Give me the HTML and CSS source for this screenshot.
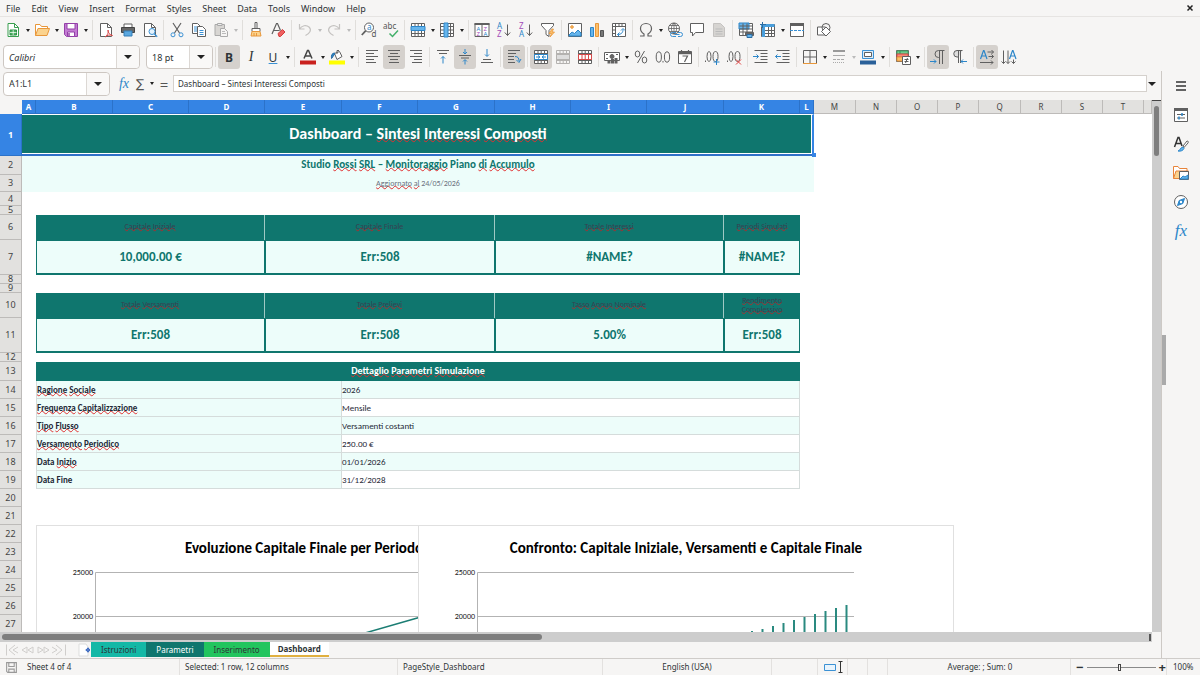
FILE: index.html
```html
<!DOCTYPE html>
<html lang="it">
<head>
  <meta charset="UTF-8">
  <meta name="viewport" content="width=device-width, initial-scale=1.0">
  <title>Dashboard – Sintesi Interessi Composti</title>
  <link rel="stylesheet" href="styles.css">
</head>
<body>
  <!-- Menu -->
  <nav class="menubar">
    <a href="#">File</a>
    <a href="#">Edit</a>
    <a href="#">View</a>
    <a href="#">Insert</a>
    <a href="#">Format</a>
    <a href="#">Styles</a>
    <a href="#">Sheet</a>
    <a href="#">Data</a>
    <a href="#">Tools</a>
    <a href="#">Window</a>
    <a href="#">Help</a>
    <button class="close-doc" aria-label="Close"><svg viewBox="0 0 8 8"><path d="M1.500 1.500l5 5M6.500 1.500l-5 5" stroke="#222" stroke-width="1.500"/></svg></button>
  </nav>

  <!-- Standard toolbar -->
  <div class="toolbar">
    <button class="tool" aria-label="New"><svg viewBox="0 0 16 16"><path d="M3 1.500h6.500l4 4v9H3z" fill="#fff" stroke="#3a9f50"/><path d="M9.500 1.500v4h4" stroke="#3a9f50"/><path d="M5 8h6.500v5H5z" fill="#4caf62" stroke="#2f9246"/><path d="M5 10.500h6.500M8.200 8v5" stroke="#fff" stroke-width=".7"/></svg></button>
    <button class="drop" aria-label="New options"></button>
    <button class="tool" aria-label="Open"><svg viewBox="0 0 16 16"><path d="M1.500 13.500V2.500H6l1.500 2h6v3" fill="#fff" stroke="#e8973a"/><path d="M1.500 13.500L4 6.500h11.500l-2.500 7z" fill="#fbd38e" stroke="#e8973a"/></svg></button>
    <button class="drop" aria-label="Open options"></button>
    <button class="tool" aria-label="Save"><svg viewBox="0 0 16 16"><path d="M1.500 1.500h13v13h-11l-2-2z" fill="#c37bd3" stroke="#9440a8"/><path d="M4 1.500h8v5.500H4z" fill="#fff" stroke="#9440a8"/><path d="M4.500 10h7v4.500h-7z" fill="#fff" stroke="#9440a8"/><path d="M6 11v3" stroke="#9440a8" stroke-width="1.500"/></svg></button>
    <button class="drop" aria-label="Save options"></button>
    <span class="sep"></span>
    <button class="tool" aria-label="Export as PDF"><svg viewBox="0 0 16 16"><path d="M2.500 1.500h7l4 4v9h-11z" fill="#fff"/><path d="M9.500 1.500v4h4"/><path d="M7 15c3-2 3.500-5 3-7 0 3 2 5 4.500 5.500C12 12.500 9 13 7 15z" stroke="#d84848"/></svg></button>
    <button class="tool" aria-label="Print"><svg viewBox="0 0 16 16"><path d="M4 5V2h8v3" fill="#fff"/><path d="M1.500 5.500h13v5h-13z" fill="#666" stroke="#444"/><path d="M4 9h8v5H4z" fill="#5ba8e0" stroke="#357fb8"/></svg></button>
    <button class="tool" aria-label="Print preview"><svg viewBox="0 0 16 16"><path d="M2.500 1.500h7l4 4v9h-11z" fill="#fff"/><path d="M9.500 1.500v4h4"/><circle cx="10" cy="9.500" r="3" fill="#e5f3fd" stroke="#3b91d4"/><path d="M12.200 11.700l3 3" stroke="#3b91d4" stroke-width="1.300"/></svg></button>
    <span class="sep"></span>
    <button class="tool" aria-label="Cut"><svg viewBox="0 0 16 16"><path d="M4 1l6.500 10M12 1L5.500 11" stroke-width="1.200"/><circle cx="4" cy="12.800" r="2" stroke="#3b91d4"/><circle cx="12" cy="12.800" r="2" stroke="#3b91d4"/></svg></button>
    <button class="tool" aria-label="Copy"><svg viewBox="0 0 16 16"><path d="M1.500 1.500h5l3 3v7h-8z" fill="#fff"/><path d="M3 5h3M3 7h3M3 9h3" stroke="#3b91d4"/><path d="M6.500 4.500h5l3 3v7h-8z" fill="#fff"/><path d="M8.500 8.500h4M8.500 10.500h4M8.500 12.500h4" stroke="#3b91d4"/></svg></button>
    <button class="tool" aria-label="Paste" disabled><svg viewBox="0 0 16 16"><path d="M2 2.500h9.500v11H2z" fill="#d8d6d3" stroke="#aaa"/><path d="M4.500 1.500h4.500v2H4.500z" fill="#eee" stroke="#aaa"/><path d="M7.500 6.500h4l3 3v5h-7z" fill="#f6f5f4" stroke="#aaa"/><path d="M9 9.500h3M9 11.500h4" stroke="#bbb"/></svg></button>
    <button class="drop off" aria-label="Paste options" disabled></button>
    <span class="sep"></span>
    <button class="tool" aria-label="Clone formatting"><svg viewBox="0 0 16 16"><path d="M7 .5h2v6H7z" fill="#fff"/><path d="M4 6.500h8v3H4z" fill="#fff"/><path d="M4 9.500h8l1 4.500H3z" fill="#fbd38e" stroke="#e8973a"/><path d="M6 11v3M8.500 11v3" stroke="#e8973a"/></svg></button>
    <button class="tool" aria-label="Clear formatting"><svg viewBox="0 0 16 16"><path d="M2 12L6.500 1.500h1l3 7M4 8.500h5.500" stroke-width="1.200"/><path d="M8 11.500l4.500-4 2.500 2.500-4.500 4.500H9z" fill="#ef6060" stroke="#d23c3c"/></svg></button>
    <span class="sep"></span>
    <button class="tool" aria-label="Undo" disabled><svg viewBox="0 0 16 16"><path d="M2.500 2v5h5M2.500 7C5 3.500 9 2.500 12 5c3 3 1 6-3.500 8.500" stroke="#c4c2c0" stroke-width="1.200"/></svg></button>
    <button class="drop off" aria-label="Undo list" disabled></button>
    <button class="tool" aria-label="Redo" disabled><svg viewBox="0 0 16 16"><path d="M13.500 2v5h-5M13.500 7C11 3.500 7 2.500 4 5c-3 3-1 6 3.500 8.500" stroke="#c4c2c0" stroke-width="1.200"/></svg></button>
    <button class="drop off" aria-label="Redo list" disabled></button>
    <span class="sep"></span>
    <button class="tool" aria-label="Find and replace"><svg viewBox="0 0 16 16"><circle cx="8" cy="5.500" r="4.500" fill="#fff"/><path d="M4.800 8.700L.8 13" stroke-width="1.800"/><text x="6" y="8" class="ic-t blue">a</text><text x="10.500" y="15" class="ic-t">d</text></svg></button>
    <button class="tool" aria-label="Spelling"><svg viewBox="0 0 16 16"><text x="0" y="7" class="ic-t">abc</text><path d="M6.500 11.500l3 3 5.500-6" stroke="#43b06a" stroke-width="1.500"/></svg></button>
    <span class="sep"></span>
    <button class="tool" aria-label="Row"><svg viewBox="0 0 16 16"><path d="M1.500 1.500h13v13h-13z" fill="#fff"/><path d="M1.500 11.500h13M5 8.500v6M8.200 8.500v6M11.500 8.500v6M5 1.500v3M8.200 1.500v3M11.500 1.500v3"/><path d="M1 4.500h14v4H1z" fill="#66b5ec" stroke="#2c86c9"/></svg></button>
    <button class="drop" aria-label="Row options"></button>
    <button class="tool" aria-label="Column"><svg viewBox="0 0 16 16"><path d="M1.500 1.500h13v13h-13z" fill="#fff"/><path d="M11.500 1.500v13M1.500 4.500h13M1.500 8h13M1.500 11.500h13"/><path d="M5 1h4v14H5z" fill="#66b5ec" stroke="#2c86c9"/></svg></button>
    <button class="drop" aria-label="Column options"></button>
    <span class="sep"></span>
    <button class="tool" aria-label="Sort"><svg viewBox="0 0 16 16"><path d="M1 1.500h14v13H1zM8 2v12" fill="#fff"/><path d="M.5 2h15" stroke-width="2"/><text x="2.500" y="8.600" class="ic-s blue">A</text><text x="2.500" y="14.300" class="ic-s purple">Z</text><text x="9.500" y="8.600" class="ic-s purple">Z</text><text x="9.500" y="14.300" class="ic-s blue">A</text></svg></button>
    <button class="tool" aria-label="Sort ascending"><svg viewBox="0 0 16 16"><text x="1" y="7" class="ic-t blue">A</text><text x="1" y="15" class="ic-t purple">Z</text><path d="M11.500 2.500v11M8.800 10.500l2.700 3 2.700-3"/></svg></button>
    <button class="tool" aria-label="Sort descending"><svg viewBox="0 0 16 16"><text x="1" y="7" class="ic-t purple">Z</text><text x="1" y="15" class="ic-t blue">A</text><path d="M11.500 2.500v11M8.800 10.500l2.700 3 2.700-3"/></svg></button>
    <button class="tool" aria-label="AutoFilter"><svg viewBox="0 0 16 16"><path d="M1.500 1.500h12v2l-4.500 5v6l-3-2V8.500l-4.500-5z" fill="#fff"/><path d="M12 7l-3 4.500h2.500L10 15l4.500-5H12l1.500-3z" fill="#fbc06c" stroke="#e8973a" stroke-width=".8"/></svg></button>
    <span class="sep"></span>
    <button class="tool" aria-label="Insert image"><svg viewBox="0 0 16 16"><path d="M1.500 1.500h13v13h-13z" fill="#fff"/><circle cx="5" cy="5" r="1.300" fill="#fbc06c" stroke="#e8973a"/><path d="M2 13l3-3 2.500 1.500L11 8l3 3v3H2z" fill="#66b5ec" stroke="#2c86c9"/></svg></button>
    <button class="tool" aria-label="Insert chart"><svg viewBox="0 0 16 16"><path d="M1.500 5.500h3v9h-3z" fill="#66b5ec" stroke="#2c86c9"/><path d="M6.500 1.500h3v13h-3z" fill="#fbc06c" stroke="#e8973a"/><path d="M11.500 8.500h3v6h-3z" fill="#777" stroke="#555"/></svg></button>
    <button class="tool" aria-label="Pivot table"><svg viewBox="0 0 16 16"><path d="M1.500 1.500h13v13h-13z" fill="#fff"/><path d="M1.500 4.500h13M4.500 1.500v13M8 1.500v3M11 1.500v3M1.500 8h3M1.500 11.500h3"/><path d="M6.500 12.500c4 0 5.500-2 5.500-5M10 8.500l2-2 2 2M8.500 10.500l-2 2 2 2" stroke="#2c86c9"/></svg></button>
    <span class="sep"></span>
    <button class="tool" aria-label="Special character"><svg viewBox="0 0 16 16"><path d="M2 14h4v-2C3.500 10.500 2.500 8.500 2.500 6.500 2.500 3.500 5 1.500 8 1.500s5.500 2 5.500 5c0 2-1 4-3.500 5.500v2h4" stroke-width="1.200"/></svg></button>
    <button class="drop" aria-label="Recent characters"></button>
    <button class="tool" aria-label="Hyperlink"><svg viewBox="0 0 16 16"><circle cx="7" cy="6.500" r="5.500" fill="#fff"/><path d="M1.500 6.500h11M2.500 3.500h9M2.500 9.500h9M7 1v11M7 1C3.500 4.500 3.500 8.500 7 12M7 1c3.500 3.500 3.500 7.500 0 11" stroke-width=".8"/><path d="M9 10.500H5.500a2 2 0 0 0 0 4H9M11 10.500h2.500a2 2 0 0 1 0 4H11M7.500 12.500h5" stroke="#3b91d4"/></svg></button>
    <button class="tool" aria-label="Comment"><svg viewBox="0 0 16 16"><path d="M1.500 1.500h13v9h-8L3.500 14v-3.500h-2z" fill="#fff"/></svg></button>
    <button class="tool" aria-label="Headers and footers" disabled><svg viewBox="0 0 16 16"><path d="M2.500 1.500h7l4 4v9h-11z" fill="#d6d4d1" stroke="#c4c2c0"/><path d="M4.500 7h7M4.500 9.500h7M4.500 12h7" stroke="#bbb"/></svg></button>
    <span class="sep"></span>
    <button class="tool" aria-label="Print area"><svg viewBox="0 0 16 16"><path d="M1.500 1.500h13v12h-13z" fill="#fff"/><path d="M1 1h10v6H1z" fill="#66b5ec" stroke="#2c86c9"/><path d="M1.500 4h13M1.500 7h13M1.500 10h13M5 1.500v12M9 1.500v12"/><path d="M7.500 10.500h8v3h-8z" fill="#666"/><path d="M9 12.500h5v3H9z" fill="#66b5ec" stroke="#2c6da3"/></svg></button>
    <button class="tool" aria-label="Freeze rows and columns"><svg viewBox="0 0 16 16"><path d="M1.500 2.500h13v12h-13z" fill="#fff"/><path d="M1.500 8.500h13M1.500 11.500h13M8.500 2.500v12M11.500 2.500v12"/><path d="M1 3.500h13.500M3.500 2v13" stroke="#4a9fdc" stroke-width="3"/><path d="M2.500 0v6M0 2.500h6" stroke="#2c6da3"/></svg></button>
    <button class="drop" aria-label="Freeze options"></button>
    <button class="tool" aria-label="Split window"><svg viewBox="0 0 16 16"><path d="M1.500 1.500h13v13h-13z" fill="#fff"/><path d="M1 2.500h14" stroke-width="3"/><path d="M1 8.500h14" stroke="#3b91d4" stroke-dasharray="3 1"/></svg></button>
    <span class="sep"></span>
    <button class="tool" aria-label="Draw functions"><svg viewBox="0 0 16 16"><path d="M1.500 5h8v8h-8z" fill="#fff"/><circle cx="10" cy="5.500" r="4"/><path d="M10 5l4.500 4.500L10 14l-4.500-4.500z" fill="#fff"/></svg></button>
  </div>

  <!-- Formatting toolbar -->
  <div class="toolbar">
    <div class="combo font-name"><input type="text" value="Calibri" aria-label="Font name"><button class="drop" aria-label="Font list"></button></div>
    <div class="combo font-size"><input type="text" value="18 pt" aria-label="Font size"><button class="drop" aria-label="Size list"></button></div>
    <span class="sep"></span>
    <button class="tool pressed letter" aria-label="Bold"><b>B</b></button>
    <button class="tool letter" aria-label="Italic"><i>I</i></button>
    <button class="tool letter" aria-label="Underline"><u>U</u></button>
    <button class="drop" aria-label="Underline options"></button>
    <span class="sep"></span>
    <button class="tool" aria-label="Font colour"><svg viewBox="0 0 16 16"><path d="M4 9.500L7.500 1.500h1l3.500 8M5.500 7h5" stroke="#444" stroke-width="1.500"/><path d="M0 13.500h16" stroke="#c9211e" stroke-width="4"/></svg></button>
    <button class="drop" aria-label="Font colours"></button>
    <button class="tool" aria-label="Background colour"><svg viewBox="0 0 16 16"><path d="M5.500 4.500l5-2 2.500 5-5 3z" fill="#fff"/><path d="M8 5V1.500h2"/><path d="M6 4C3 4 2 6 2.500 9.500 4 9 4 6 6 5" fill="#2c86c9" stroke="#2c6da3"/><path d="M0 13.500h16" stroke="#ffff00" stroke-width="4"/></svg></button>
    <button class="drop" aria-label="Background colours"></button>
    <span class="sep"></span>
    <button class="tool" aria-label="Align left"><svg viewBox="0 0 16 16"><path d="M2 1.500h12M2 4.500h8M2 7.500h12M2 10.500h8M2 13.500h10"/></svg></button>
    <button class="tool pressed" aria-label="Centre"><svg viewBox="0 0 16 16"><path d="M2 1.500h12M4 4.500h8M2 7.500h12M4 10.500h8M3 13.500h10"/></svg></button>
    <button class="tool" aria-label="Align right"><svg viewBox="0 0 16 16"><path d="M2 1.500h12M6 4.500h8M2 7.500h12M6 10.500h8M4 13.500h10"/></svg></button>
    <span class="sep"></span>
    <button class="tool" aria-label="Align top"><svg viewBox="0 0 16 16"><path d="M2 1.500h12M4 4.500h8"/><path d="M8 14.500v-7M6 9.500l2-2 2 2" stroke="#2c86c9"/></svg></button>
    <button class="tool pressed" aria-label="Centre vertically"><svg viewBox="0 0 16 16"><path d="M2 6.500h12M4 9h8"/><path d="M8 0v4.500M6 3l2 2 2-2M8 15.500V11M6 12.500l2-2 2 2" stroke="#2c86c9"/></svg></button>
    <button class="tool" aria-label="Align bottom"><svg viewBox="0 0 16 16"><path d="M4 10.500h8M2 13.500h12"/><path d="M8 0v7M6 5.500l2 2 2-2" stroke="#2c86c9"/></svg></button>
    <span class="sep"></span>
    <button class="tool pressed" aria-label="Wrap text"><svg viewBox="0 0 16 16"><path d="M2 1.500h12M2 4.500h8M2 7.500h6M2 10.500h6M2 13.500h7"/><path d="M9 7.500c3 0 4 1.500 4 4.500M10.500 11l2.500 2.500L15 10" stroke="#2c86c9"/></svg></button>
    <span class="sep"></span>
    <button class="tool pressed" aria-label="Merge and centre"><svg viewBox="0 0 16 16"><path d="M1.500 1.500h13v13h-13z" fill="#fff"/><path d="M5 1.500v13M8.200 1.500v13M11.500 1.500v13M1.500 4.500h13M1.500 11.500h13"/><path d="M1.500 5.500h13v5h-13z" fill="#fff" stroke="#2c86c9"/><path d="M3 8h4M9 8h4M5 6.500L7 8 5 9.500M11 6.500L9 8l2 1.500" stroke="#2c86c9"/></svg></button>
    <button class="tool" aria-label="Merge cells" disabled><svg viewBox="0 0 16 16"><path d="M1.500 1.500h13v13h-13zM5 1.500v13M8.200 1.500v13M11.500 1.500v13M1.500 4.500h13M1.500 11.500h13" stroke="#b4b2b0"/><path d="M1.500 5.500h13v5h-13z" fill="#ddd" stroke="#b4b2b0"/></svg></button>
    <button class="tool" aria-label="Unmerge cells"><svg viewBox="0 0 16 16"><path d="M1.500 1.500h13v13h-13z" fill="#fff"/><path d="M5 1.500v13M8.200 1.500v13M11.500 1.500v13M1.500 4.500h13M1.500 11.500h13"/><path d="M1.500 5.500h13v5h-13z" fill="#fff" stroke="#d84848"/><path d="M5 5.500v5M8.200 5.500v5M11.500 5.500v5" stroke="#d84848"/></svg></button>
    <span class="sep"></span>
    <button class="tool" aria-label="Currency"><svg viewBox="0 0 16 16"><path d="M.5 3.500h15v8H.5z" fill="#fff"/><circle cx="8" cy="7.500" r="2" fill="#666"/><path d="M2 5.500h2M12 5.500h2M2 9.500h2"/><path d="M5 12v2.500M8.500 10v4.500M12 9v5.500" stroke-width="3"/></svg></button>
    <button class="drop" aria-label="Currency options"></button>
    <button class="tool" aria-label="Percent"><svg viewBox="0 0 16 16"><ellipse cx="4.500" cy="5" rx="2.300" ry="3"/><ellipse cx="11.500" cy="11" rx="2.300" ry="3"/><path d="M11.500 2l-7 12"/></svg></button>
    <button class="tool" aria-label="Number"><svg viewBox="0 0 16 16"><ellipse cx="3.800" cy="8" rx="2.600" ry="5.200"/><ellipse cx="12" cy="8" rx="2.600" ry="5.200"/><path d="M8 12v1.500"/></svg></button>
    <button class="tool" aria-label="Date"><svg viewBox="0 0 16 16"><path d="M1.500 2.500h13v12h-13z" fill="#fff"/><path d="M1.500 4h13" stroke-width="2.500"/><path d="M4.500 1v3M11.500 1v3M5.500 7h5l-3 6" stroke-width="1.200"/></svg></button>
    <span class="sep"></span>
    <button class="tool" aria-label="Add decimal place"><svg viewBox="0 0 16 16"><path d="M1.500 11.500V13"/><ellipse cx="5" cy="7.500" rx="2" ry="5"/><ellipse cx="11.500" cy="7.500" rx="2.500" ry="5"/><path d="M12.500 10v6M9.500 13h6" stroke="#2c86c9"/></svg></button>
    <button class="tool" aria-label="Delete decimal place"><svg viewBox="0 0 16 16"><path d="M1.500 11.500V13"/><ellipse cx="5" cy="7.500" rx="2" ry="5"/><ellipse cx="11.500" cy="7.500" rx="2.500" ry="5"/><path d="M10 10.500l5 5M15 10.500l-5 5" stroke="#e04040"/></svg></button>
    <span class="sep"></span>
    <button class="tool" aria-label="Increase indent"><svg viewBox="0 0 16 16"><path d="M1.500 1.500h13M7.500 4.500h7M7.500 7.500h7M7.500 10.500h7M1.500 13.500h13"/><path d="M0 7.500h5.500M3.500 5.500l2 2-2 2" stroke="#2c86c9"/></svg></button>
    <button class="tool" aria-label="Decrease indent"><svg viewBox="0 0 16 16"><path d="M1.500 1.500h13M7.500 4.500h7M7.500 7.500h7M7.500 10.500h7M1.500 13.500h13"/><path d="M6 7.500H.5M2.500 5.500l-2 2 2 2" stroke="#2c86c9"/></svg></button>
    <span class="sep"></span>
    <button class="tool" aria-label="Borders"><svg viewBox="0 0 16 16"><path d="M1.500 14V1.500h13V14M8 1.500V14M1.500 8h13"/><path d="M1 14.500h14" stroke="#e8973a"/></svg></button>
    <button class="drop" aria-label="Border options"></button>
    <button class="tool" aria-label="Border style" disabled><svg viewBox="0 0 16 16"><path d="M2 2h12" stroke="#999" stroke-width="2"/><path d="M2 6.500h12" stroke="#aaa"/><path d="M2 10.500h12" stroke="#aaa" stroke-dasharray="3 1"/><path d="M2 13.500h12" stroke="#aaa" stroke-dasharray="1 1"/></svg></button>
    <button class="drop off" aria-label="Border styles" disabled></button>
    <button class="tool" aria-label="Border colour"><svg viewBox="0 0 16 16"><path d="M2.500 1.500h11v8h-11z" fill="#d9ecfa" stroke="#3b91d4"/><path d="M4.500 3.500h7v4h-7z" fill="#fff"/><path d="M0 13.500h16" stroke="#2a6099" stroke-width="4"/></svg></button>
    <button class="drop" aria-label="Border colours"></button>
    <span class="sep"></span>
    <button class="tool" aria-label="Conditional formatting"><svg viewBox="0 0 16 16"><path d="M1.500 1.500h12v11h-12z" fill="#fff"/><path d="M2 2h3v3H2zM5 2h8v3H5z" fill="#6fce8f" stroke="#43a866"/><path d="M2 5h11v3H2z" fill="#f58a7a" stroke="#d84848"/><path d="M2 8h6v4H2z" fill="#fbc06c" stroke="#e8973a"/><path d="M7.500 7.500h8v8h-8z" fill="#fff"/><path d="M9.500 10.500h4M9.500 12.500h4M12.500 9l-2 5"/></svg></button>
    <button class="drop" aria-label="Conditional formats"></button>
    <span class="sep"></span>
    <button class="tool pressed" aria-label="Left to right"><svg viewBox="0 0 16 16"><path d="M9.500 15V1.500M12.500 15V1.500M14.500 1.500H8.500a3.500 3.500 0 0 0 0 7h1"/><path d="M0 12.500h6M4 10.500l2 2-2 2" stroke="#2c86c9"/></svg></button>
    <button class="tool" aria-label="Right to left"><svg viewBox="0 0 16 16"><path d="M6.500 14V1.500M8.500 14V1.500M10.500 1.500H5a3 3 0 0 0 0 6.500h1.500" fill="#ddd"/><path d="M9 12.500h6M11 10.500l-2 2 2 2" stroke="#2c86c9"/></svg></button>
    <span class="sep"></span>
    <button class="tool pressed" aria-label="Text direction left to right"><svg viewBox="0 0 16 16"><path d="M1.500 10L4.500 1.500h.5L8 10M2.500 7H7" stroke="#2c86c9" stroke-width="1.200"/><path d="M8.500 3h6M9.500 7.500h5M1 13.500h13M12.500 1l2 2-2 2M12.500 5.500l2 2-2 2M12 11.500l2 2-2 2"/></svg></button>
    <button class="tool" aria-label="Text direction top to bottom"><svg viewBox="0 0 16 16"><path d="M8.500 10l3-8.500h.5l3 8.500M9.500 7H14" stroke="#2c86c9" stroke-width="1.200"/><path d="M2.500 1.500v13M7 1.500v13M12.500 10.500v4M.5 12.500l2 2 2-2M5 12.500l2 2 2-2M10.500 12.500l2 2 2-2"/></svg></button>
  </div>

  <div class="workspace">
    <main class="document">
      <!-- Formula bar -->
      <div class="formula-bar">
        <div class="combo name-box"><input type="text" value="A1:L1" aria-label="Name box"><button class="drop" aria-label="Names"></button></div>
        <button class="fx" aria-label="Function wizard"><i>fx</i></button>
        <button class="sigma" aria-label="Select function">∑</button>
        <button class="drop" aria-label="Functions"></button>
        <button class="equals" aria-label="Formula">=</button>
        <input class="formula" type="text" value="Dashboard – Sintesi Interessi Composti" aria-label="Input line">
        <button class="drop wide" aria-label="Expand formula bar"></button>
      </div>

      <div class="sheet-area">
        <div class="sheet">
          <table class="grid">
            <colgroup>
              <col class="c-head"><col class="c-edge">
              <col class="c-77"><col class="c-76"><col class="c-76"><col class="c-77"><col class="c-76">
              <col class="c-77"><col class="c-76"><col class="c-76"><col class="c-77"><col class="c-76">
              <col class="c-edge">
              <col class="c-42"><col class="c-41"><col class="c-41"><col class="c-41">
              <col class="c-42"><col class="c-41"><col class="c-41"><col class="c-41">
              <col>
            </colgroup>
            <thead>
              <tr>
                <th class="corner"></th>
                <th class="sel">A</th><th class="sel">B</th><th class="sel">C</th><th class="sel">D</th><th class="sel">E</th><th class="sel">F</th>
                <th class="sel">G</th><th class="sel">H</th><th class="sel">I</th><th class="sel">J</th><th class="sel">K</th><th class="sel">L</th>
                <th>M</th><th>N</th><th>O</th><th>P</th><th>Q</th><th>R</th><th>S</th><th>T</th><th></th>
              </tr>
            </thead>
            <tbody>
              <tr class="h-42"><th class="sel">1</th><td colspan="12" class="title">Dashboard – <s>Sintesi</s> <s>Interessi</s> <s>Composti</s><span class="selection"></span></td></tr>
              <tr class="h-19"><th>2</th><td colspan="12" class="subtitle">Studio <s>Rossi</s> <s>SRL</s> – <s>Monitoraggio</s> Piano <s>di</s> <s>Accumulo</s></td></tr>
              <tr class="h-17"><th>3</th><td colspan="12" class="updated"><s>Aggiornato</s> <s>al</s> 24/05/2026</td></tr>
              <tr class="h-14"><th>4</th></tr>
              <tr class="h-9"><th>5</th></tr>
              <tr class="h-25"><th>6</th><td></td>
                <td colspan="3" class="kpi-label"><s>Capitale</s> <s>Iniziale</s></td>
                <td colspan="3" class="kpi-label"><s>Capitale</s> Finale</td>
                <td colspan="3" class="kpi-label"><s>Totale</s> <s>Interessi</s></td>
                <td class="kpi-label"><s>Periodi</s> <s>Simulati</s></td>
              </tr>
              <tr class="h-35"><th>7</th><td></td>
                <td colspan="3" class="kpi">10,000.00 €</td>
                <td colspan="3" class="kpi">Err:508</td>
                <td colspan="3" class="kpi">#NAME?</td>
                <td class="kpi">#NAME?</td>
              </tr>
              <tr class="h-9"><th>8</th></tr>
              <tr class="h-9"><th>9</th></tr>
              <tr class="h-25"><th>10</th><td></td>
                <td colspan="3" class="kpi-label"><s>Totale</s> <s>Versamenti</s></td>
                <td colspan="3" class="kpi-label"><s>Totale</s> <s>Prelievi</s></td>
                <td colspan="3" class="kpi-label"><s>Tasso</s> <s>Annuo</s> <s>Nominale</s></td>
                <td class="kpi-label"><s>Rendimento</s> <s>Complessivo</s></td>
              </tr>
              <tr class="h-35"><th>11</th><td></td>
                <td colspan="3" class="kpi">Err:508</td>
                <td colspan="3" class="kpi">Err:508</td>
                <td colspan="3" class="kpi">5.00%</td>
                <td class="kpi">Err:508</td>
              </tr>
              <tr class="h-9"><th>12</th></tr>
              <tr class="h-19"><th>13</th><td></td><td colspan="10" class="detail-title"><s>Dettaglio</s> <s>Parametri</s> <s>Simulazione</s></td></tr>
              <tr class="h-18"><th>14</th><td></td><td colspan="4" class="param"><s>Ragione</s> <s>Sociale</s></td><td colspan="6" class="value mint">2026</td></tr>
              <tr class="h-18"><th>15</th><td></td><td colspan="4" class="param"><s>Frequenza</s> <s>Capitalizzazione</s></td><td colspan="6" class="value">Mensile</td></tr>
              <tr class="h-18"><th>16</th><td></td><td colspan="4" class="param"><s>Tipo</s> <s>Flusso</s></td><td colspan="6" class="value mint">Versamenti costanti</td></tr>
              <tr class="h-18"><th>17</th><td></td><td colspan="4" class="param"><s>Versamento</s> <s>Periodico</s></td><td colspan="6" class="value">250.00 €</td></tr>
              <tr class="h-18"><th>18</th><td></td><td colspan="4" class="param">Data <s>Inizio</s></td><td colspan="6" class="value mint">01/01/2026</td></tr>
              <tr class="h-18"><th>19</th><td></td><td colspan="4" class="param">Data Fine</td><td colspan="6" class="value">31/12/2028</td></tr>
              <tr class="h-18"><th>20</th></tr>
              <tr class="h-18"><th>21</th></tr>
              <tr class="h-18"><th>22</th></tr>
              <tr class="h-18"><th>23</th></tr>
              <tr class="h-18"><th>24</th></tr>
              <tr class="h-18"><th>25</th></tr>
              <tr class="h-18"><th>26</th></tr>
              <tr class="h-18"><th>27</th></tr>
            </tbody>
          </table>

          <!-- Charts float over the cells -->
          <figure class="chart chart-line">
            <figcaption>Evoluzione Capitale Finale per Periodo</figcaption>
            <svg viewBox="0 0 536 300">
              <path d="M58.500 300V46.500H434M58.500 90.500H434" stroke="#b3b3b3"/>
              <text x="56" y="49" class="axis">25000</text>
              <text x="56" y="93" class="axis">20000</text>
              <path d="M310 114L328 107 382 91.500 434 72" stroke="#1b7d73" stroke-width="1.500"/>
            </svg>
          </figure>
          <figure class="chart chart-bars">
            <figcaption>Confronto: Capitale Iniziale, Versamenti e Capitale Finale</figcaption>
            <svg viewBox="0 0 536 300">
              <path d="M58.500 300V46.500H435M58.500 90.500H435" stroke="#b3b3b3"/>
              <text x="56" y="49" class="axis">25000</text>
              <text x="56" y="93" class="axis">20000</text>
              <path d="M333 105v9M343.500 103v11M354 100v14M364.500 97v17M375 94v20M385.500 91v23M396 88v26M406.500 85v29M417 82v32M427.500 79v35" stroke="#2a8a80" stroke-width="2"/>
            </svg>
          </figure>
        </div>
        <div class="v-scroll"><span class="thumb"></span></div>
      </div>
      <div class="h-scroll"><span class="thumb"></span><span class="stopper"></span></div>

      <!-- Sheet tabs -->
      <div class="tabs">
        <span class="tab-nav">
          <svg viewBox="0 0 62 14"><path d="M1.500 1.500v11M10 2L4 7l6 5M13 4L8 7l5 3M22 4l-5 3 5 3zM28 4l-5 3 5 3zM33 4l5 3-5 3zM39 4l5 3-5 3zM47 4l5 3-5 3M51 2l6 5-6 5M60.500 1.500v11" stroke="#d0cecc"/></svg>
        </span>
        <button class="add-sheet" aria-label="Add sheet"><svg viewBox="0 0 12 14"><path d="M1 1h7l2 3v9H1z" fill="#fff" stroke="#ddd"/><circle cx="10" cy="7" r="1.500" stroke="#3465c0"/><path d="M10 4.500v5M7.500 7h4.500" stroke="#3465c0"/></svg></button>
        <button class="tab tab-istruzioni">Istruzioni</button>
        <button class="tab tab-parametri">Parametri</button>
        <button class="tab tab-inserimento">Inserimento</button>
        <button class="tab tab-dashboard">Dashboard</button>
      </div>
    </main>

    <!-- Sidebar -->
    <aside class="sidebar">
      <span class="grip"></span>
      <button aria-label="Settings"><svg viewBox="0 0 16 16"><path d="M3 4h10M3 8h10M3 12h10" stroke="#333" stroke-width="1.500"/></svg></button>
      <button aria-label="Properties"><svg viewBox="0 0 16 16"><path d="M1.500 1.500h13v13h-13z" fill="#fff"/><path d="M1 2.500h14" stroke-width="3"/><path d="M4 7.500h8M4 11h8"/><path d="M9 6v3M6 9.500v3" stroke="#2c86c9" stroke-width="1.500"/></svg></button>
      <button aria-label="Styles"><svg viewBox="0 0 16 16"><path d="M1.500 11L5 1.500h1L9 10M2.800 7.500h5.500" stroke="#333" stroke-width="1.500"/><path d="M10 10l4-5c1.500 0 1.500 1 1 2l-4 4.500z" fill="#fff"/><path d="M5 15c2 0 2-3.500 5-4l1 1.500C10 14.500 8 15.500 5 15z" fill="#66b5ec" stroke="#2c86c9"/></svg></button>
      <button aria-label="Gallery"><svg viewBox="0 0 16 16"><path d="M.5 13.500v-12H5l1.500 2H14v3" fill="#fff" stroke="#e8843a"/><path d="M.5 13.500L3 6h12.500v7.500z" fill="#fbd38e" stroke="#e8843a"/><path d="M6.500 6.500h9v8h-9z" fill="#fff"/><path d="M7 14l3-3 2 1 3-2v4z" fill="#66b5ec" stroke="#2c86c9"/></svg></button>
      <button aria-label="Navigator"><svg viewBox="0 0 16 16"><circle cx="8" cy="8" r="6.500" fill="#fff"/><path d="M11.500 4.500L9.800 9.500 4.500 11.500 6.200 6.500z" fill="#2c86c9" stroke="#2c86c9"/><circle cx="8" cy="8" r="1.200" fill="#fff" stroke="none"/></svg></button>
      <button class="fx" aria-label="Functions"><i>fx</i></button>
    </aside>
  </div>

  <footer class="statusbar">
    <span class="s-save"><svg viewBox="0 0 12 12"><path d="M1.500 1.500h9v9h-8l-1-1zM3.500 1.500v3.500h5V1.500M3.500 10.500V7.500h5v3" stroke="#999"/></svg></span>
    <span class="s-sheet">Sheet 4 of 4</span>
    <span class="s-selected">Selected: 1 row, 12 columns</span>
    <span class="s-style">PageStyle_Dashboard</span>
    <span class="s-lang">English (USA)</span>
    <span class="s-insert"></span>
    <span class="s-mode"><svg viewBox="0 0 22 12"><path d="M2.500 3.500h11v6h-11z" fill="#e8f4fd" stroke="#3b91d4"/><path d="M18.500 1v10M16.500 .5h4M16.500 11.500h4" stroke="#333"/></svg></span>
    <span class="s-gap"></span>
    <span class="s-gap"></span>
    <span class="s-sum">Average: ; Sum: 0</span>
    <span class="s-zoom">
      <button aria-label="Zoom out">−</button>
      <input type="range" min="0" max="100" value="48" aria-label="Zoom">
      <button aria-label="Zoom in">+</button>
    </span>
    <span class="s-percent">100%</span>
  </footer>
</body>
</html>
```
FILE: styles.css
```css
* {
  box-sizing: border-box;
}

body {
  margin: 0;
  height: 100vh;
  display: flex;
  flex-direction: column;
  overflow: hidden;
  background: #f6f5f4;
  color: #2e3436;
  font-family: 'Noto Sans', sans-serif;
  font-size: 9px;
}

button,
input {
  font: inherit;
  color: inherit;
  margin: 0;
  padding: 0;
  border: none;
  background: none;
}

svg {
  display: block;
  fill: none;
  stroke: #606060;
}

/* Menu */
.menubar {
  display: flex;
  align-items: center;
  flex: none;
  height: 17px;
  padding: 0 6px;
  gap: 11px;
  border-bottom: 1px solid #e6e4e2;
}

.menubar a {
  color: inherit;
  text-decoration: none;
}

.close-doc {
  margin-left: auto;
}

.close-doc svg {
  width: 8px;
  height: 8px;
}

/* Toolbars */
.toolbar {
  display: flex;
  align-items: center;
  flex: none;
  height: 27px;
  padding: 0 0 1px 2px;
}

.tool {
  display: flex;
  align-items: center;
  justify-content: center;
  flex: none;
  width: 22px;
  height: 24px;
  border-radius: 3px;
}

.tool svg {
  width: 16px;
  height: 16px;
  overflow: visible;
}

.tool text {
  stroke: none;
  fill: #555;
}

.tool .ic-t {
  font-size: 8px;
}

.tool .ic-s {
  font-size: 6px;
}

.tool .blue {
  fill: #2c86c9;
}

.tool .purple {
  fill: #a34bb8;
}

.letter {
  font-size: 12px;
}

.letter i {
  font-family: 'Liberation Serif', serif;
  font-size: 14px;
}

.letter u {
  text-decoration-color: #3b91d4;
}

.pressed {
  background: #d5d1cd;
}

.sep {
  flex: none;
  width: 1px;
  height: 20px;
  margin: 0 2px;
  background: #e0dedb;
}

.drop {
  flex: none;
  width: 7px;
  height: 24px;
  display: flex;
  align-items: center;
  justify-content: center;
}

.drop::before {
  content: '';
  border: 2px solid transparent;
  border-top: 3px solid #222;
  border-bottom: none;
}

.drop.off::before {
  border-top-color: #bbb;
}

.drop + .sep {
  margin-left: 3px;
}

.combo {
  display: flex;
  flex: none;
  height: 24px;
  border: 1px solid #cdc7c2;
  border-radius: 4px;
  background: #fff;
}

.combo input {
  flex: 1;
  min-width: 0;
  padding-left: 5px;
}

.combo .drop {
  width: 23px;
  height: 22px;
  border-left: 1px solid #dcd8d4;
  background: #f9f8f7;
  border-radius: 0 4px 4px 0;
}

.combo .drop::before,
.drop.wide::before {
  border-width: 4px;
  border-bottom: none;
}

.font-name {
  width: 137px;
  margin: 0 6px 0 1px;
  font-style: italic;
}

.font-size {
  width: 67px;
}

/* Workspace */
.workspace {
  flex: 1;
  display: flex;
  min-height: 0;
}

.document {
  flex: 1;
  min-width: 0;
  display: flex;
  flex-direction: column;
}

.formula-bar {
  display: flex;
  align-items: center;
  flex: none;
  height: 29px;
  padding: 0 4px 4px 3px;
}

.name-box {
  width: 107px;
  margin-right: 6px;
}

.fx {
  width: 16px;
  color: #2c86c9;
  font-family: 'Liberation Serif', serif;
  font-size: 14px;
}

.sigma {
  width: 16px;
  font-family: 'DejaVu Sans', sans-serif;
  font-size: 12px;
  color: #555;
}

.equals {
  width: 18px;
  font-size: 15px;
  line-height: 16px;
  color: #555;
}

.formula {
  flex: 1;
  min-width: 0;
  height: 17px;
  padding-left: 4px;
  border: 1px solid #d5d1cd;
  background: #fff;
  font-size: 8px;
}

.drop.wide {
  width: 10px;
}

.sheet-area {
  flex: 1;
  display: flex;
  min-height: 0;
}

.sheet {
  position: relative;
  flex: 1;
  min-width: 0;
  overflow: hidden;
  background: #fff;
}

/* Grid */
.grid {
  width: 100%;
  min-width: 1150px;
  table-layout: fixed;
  border-collapse: separate;
  border-spacing: 0;
}

.c-head { width: 22px; }
.c-edge { width: 14px; }
.c-41 { width: 41px; }
.c-42 { width: 42px; }
.c-76 { width: 76px; }
.c-77 { width: 77px; }

.grid th {
  padding: 0;
  background: #e2e1df;
  border-right: 1px solid #bdbbb9;
  border-bottom: 1px solid #bdbbb9;
  color: #444;
  font-size: 9px;
  font-weight: normal;
  line-height: 8px;
}

.grid thead th {
  height: 14px;
  font-size: 8px;
}

.grid th.sel {
  background: #3584e4;
  border-color: #2b72c9;
  color: #fff;
  font-weight: bold;
}

.grid thead th.corner {
  background: #f6f5f4;
  border-color: #f6f5f4;
}

.grid td {
  padding: 0;
  text-align: center;
  font-family: Carlito, Lato, sans-serif;
  line-height: 9px;
}

.h-9 { height: 9px; }
.h-14 { height: 14px; }
.h-17 { height: 17px; }
.h-18 { height: 18px; }
.h-19 { height: 19px; }
.h-25 { height: 25px; }
.h-35 { height: 35px; }
.h-42 { height: 42px; }

/* Words marked by the spell checker */
.grid s {
  text-decoration: underline wavy #e03030 1px;
  text-decoration-skip-ink: none;
  text-underline-offset: -1px;
}

.grid .title {
  position: relative;
  padding-bottom: 4px;
  background: #0f766e;
  color: #fff;
  font-size: 16px;
  font-weight: bold;
}

.selection {
  position: absolute;
  inset: 0;
  border: 1px solid #fff;
  border-left: none;
  border-right: 2px solid #3584e4;
  border-bottom: 2px solid #3071c9;
  box-shadow: inset -1px -1px #fff;
}

.selection::after {
  content: '';
  position: absolute;
  right: -4px;
  bottom: -3px;
  width: 4px;
  height: 4px;
  background: #3584e4;
}

.grid .subtitle {
  padding-bottom: 2px;
  background: #edfdfa;
  color: #0f766e;
  font-size: 11px;
  font-weight: bold;
}

.grid .updated {
  background: #edfdfa;
  color: #6b7280;
  font-size: 8px;
}

.grid .kpi-label {
  padding: 0 8px 2px;
  background: #0f766e;
  border-right: 1px solid #9fc9c4;
  color: #374151;
  font-size: 8px;
}

.grid .kpi-label s {
  text-decoration-color: #a52f30;
  text-underline-offset: -2px;
}

.grid .kpi-label:last-child {
  border-right: none;
}

.grid .kpi {
  padding-bottom: 2px;
  background: #edfdfa;
  border: 1px solid #0f766e;
  border-bottom-width: 2px;
  color: #0f766e;
  font-size: 13px;
  font-weight: bold;
}

.grid .detail-title {
  padding-bottom: 2px;
  background: #0f766e;
  color: #fff;
  font-size: 10px;
  font-weight: bold;
}

.grid .param,
.grid .value {
  border-right: 1px solid #d5dcdb;
  border-bottom: 1px solid #d5dcdb;
  color: #1f2937;
  font-size: 9px;
  text-align: left;
}

.grid .param {
  background: #edfdfa;
  border-left: 1px solid #d5dcdb;
  font-weight: bold;
}

.grid .mint {
  background: #edfdfa;
}

/* Charts */
.chart {
  position: absolute;
  top: 425px;
  width: 536px;
  height: 300px;
  margin: 0;
  background: #fff;
  border: 1px solid #e0e0e0;
}

.chart-line {
  left: 36px;
}

.chart-bars {
  left: 418px;
}

.chart figcaption {
  position: absolute;
  top: 12px;
  width: 100%;
  color: #000;
  font-family: Carlito, Lato, sans-serif;
  font-size: 15px;
  font-weight: bold;
  line-height: 20px;
  text-align: center;
}

.chart svg {
  width: 536px;
  height: 300px;
}

.axis {
  fill: #222;
  stroke: none;
  font-family: Carlito, Lato, sans-serif;
  font-size: 8px;
  text-anchor: end;
}

/* Scroll bars */
.v-scroll {
  flex: none;
  width: 9px;
  padding: 5px 2px;
  background: #cdcdcd;
  border-top: 1px solid #444;
}

.v-scroll .thumb {
  display: block;
  height: 50px;
  border-radius: 3px;
  background: #7e7e7e;
}

.h-scroll {
  display: flex;
  align-items: center;
  justify-content: space-between;
  flex: none;
  height: 10px;
  margin-right: 9px;
  padding: 0 1px 0 2px;
  background: #cdcdcd;
}

.h-scroll .thumb {
  width: 47%;
  height: 6px;
  border-radius: 3px;
  background: #7e7e7e;
}

.stopper {
  width: 2px;
  height: 7px;
  background: #555;
}

/* Sheet tabs */
.tabs {
  display: flex;
  flex: none;
  height: 16px;
  font-size: 8px;
}

.tab-nav {
  padding: 1px 11px 0 5px;
}

.tab-nav svg {
  width: 62px;
  height: 14px;
}

.add-sheet svg {
  width: 12px;
  height: 14px;
}

.tab {
  height: 15px;
  padding: 0 10px;
}

.tab-istruzioni {
  margin-left: 1px;
  background: #14b8a6;
}

.tab-parametri {
  background: #0f766e;
  color: #fff;
}

.tab-inserimento {
  background: #22c55e;
}

.tab-dashboard {
  padding: 0 8px;
  background: #fff;
  border-bottom: 2px solid #e0b040;
  font-weight: bold;
}

/* Sidebar */
.sidebar {
  position: relative;
  flex: none;
  width: 39px;
  display: flex;
  flex-direction: column;
  align-items: center;
  gap: 5px;
  padding-top: 3px;
  border-left: 1px solid #cdc9c5;
}

.sidebar button {
  display: flex;
  align-items: center;
  justify-content: center;
  width: 24px;
  height: 24px;
}

.sidebar svg {
  width: 16px;
  height: 16px;
}

.sidebar .fx {
  font-size: 17px;
}

.grip {
  position: absolute;
  left: 0;
  top: 45%;
  width: 4px;
  height: 50px;
  background: #aaa;
}

/* Status bar */
.statusbar {
  display: flex;
  flex: none;
  height: 17px;
  border-top: 1px solid #cfccc9;
  font-size: 8px;
  line-height: 16px;
}

.statusbar > span {
  border-right: 1px solid #e3e1df;
}

.statusbar > .s-save {
  width: 25px;
  padding: 2px 0 0 5px;
  border-right: none;
}

.s-save svg {
  width: 13px;
  height: 13px;
}

.s-sheet {
  width: 155px;
  padding-left: 2px;
}

.s-selected {
  width: 218px;
  padding-left: 5px;
}

.s-style {
  width: 205px;
  padding-left: 5px;
}

.s-lang {
  width: 169px;
  text-align: center;
}

.s-insert {
  width: 46px;
}

.s-mode {
  width: 30px;
  padding: 2px 0 0 4px;
}

.s-mode svg {
  width: 22px;
  height: 12px;
}

.s-gap {
  width: 20px;
}

.s-sum {
  flex: 1;
  padding-left: 2px;
  text-align: center;
}

.s-zoom {
  display: flex;
  align-items: center;
  gap: 3px;
  width: 96px;
  padding-left: 5px;
}

.s-zoom button {
  font-size: 13px;
  line-height: 14px;
  font-weight: bold;
}

.s-zoom input {
  flex: 1;
  min-width: 0;
  height: 8px;
  appearance: none;
  background: linear-gradient(#8a8a8a, #8a8a8a) center / 100% 1px no-repeat;
}

.s-zoom input::-webkit-slider-thumb {
  appearance: none;
  width: 3px;
  height: 7px;
  border: 1px solid #444;
  background: #f6f5f4;
}

.statusbar > .s-percent {
  width: 33px;
  padding-left: 6px;
  border-right: none;
}
```
